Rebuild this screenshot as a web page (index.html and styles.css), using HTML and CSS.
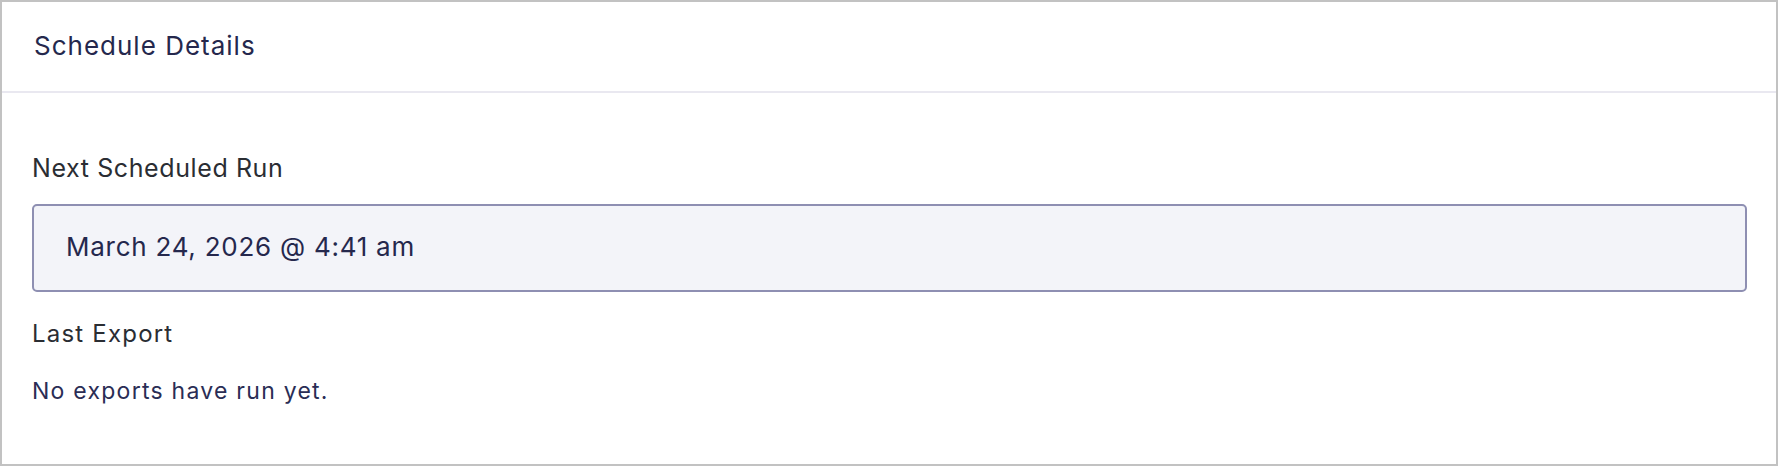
FILE: index.html
```html
<!DOCTYPE html>
<html lang="en">
<head>
  <meta charset="UTF-8" />
  <meta name="viewport" content="width=device-width, initial-scale=1.0" />
  <title>Schedule Details</title>
  <link rel="stylesheet" href="styles.css">
</head>
<body>
  <div class="panel">
    <div class="panel-header">
      <h2>Schedule Details</h2>
    </div>
    <div class="panel-body">
      <div class="label">Next Scheduled Run</div>
      <div class="field">March 24, 2026 @ 4:41 am</div>
      <div class="label last">Last Export</div>
      <p class="empty">No exports have run yet.</p>
    </div>
  </div>
</body>
</html>
```

FILE: styles.css
```css
html, body {
  margin: 0;
  height: 100%;
}
body {
  font-family: 'Inter', 'Noto Sans', sans-serif;
  background: #fff;
}
.panel {
  box-sizing: border-box;
  height: 466px;
  border: 2px solid #c2c2c2;
  background: #fff;
}
.panel-header {
  height: 87px;
  padding: 0 32px 2px;
  display: flex;
  align-items: center;
  border-bottom: 2px solid #e9e8f0;
}
.panel-header h2 {
  margin: 0;
  font-size: 26px;
  font-weight: 400;
  letter-spacing: 1px;
  color: #25284d;
}
.panel-body {
  padding: 60px 29px 0 30px;
}
.label {
  font-size: 25px;
  letter-spacing: 0.6px;
  color: #2a2d33;
  line-height: 30px;
}
.field {
  margin-top: 21px;
  padding: 26px 32px 28px;
  background: #f3f4f9;
  border: 2px solid #8e8fb2;
  border-radius: 5px;
  font-size: 26px;
  letter-spacing: 0.75px;
  line-height: 30px;
  color: #25284d;
}
.label.last {
  margin-top: 27px;
  font-size: 24px;
  letter-spacing: 1.2px;
  line-height: 29px;
}
.empty {
  margin: 29px 0 0;
  font-size: 23px;
  letter-spacing: 1.25px;
  line-height: 28px;
  color: #2a2d55;
}
```
